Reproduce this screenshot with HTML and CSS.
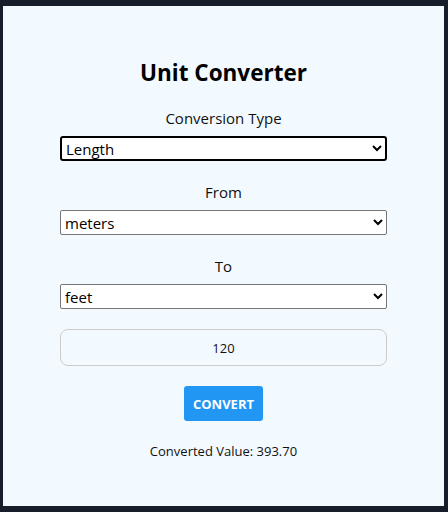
FILE: index.html
```html
<!DOCTYPE html>
<html>
<head>
<meta charset="utf-8">
<link rel="stylesheet" href="styles.css">
</head>
<body>
<div class="card">
  <h1 class="title">Unit Converter</h1>
  <div class="field">
    <label class="label">Conversion Type</label>
    <select class="select focused">
      <option>Length</option>
    </select>
  </div>
  <div class="field">
    <label class="label">From</label>
    <select class="select">
      <option>meters</option>
    </select>
  </div>
  <div class="field">
    <label class="label">To</label>
    <select class="select">
      <option>feet</option>
    </select>
  </div>
  <input class="amount" type="text" value="120">
  <button class="btn">CONVERT</button>
  <p class="result">Converted Value: 393.70</p>
</div>
</body>
</html>
```
FILE: styles.css
```css
html, body {
  margin: 0;
  padding: 0;
}
body {
  background: #181d2b;
  padding: 6px 4px 6px 3px;
  height: 512px;
  box-sizing: border-box;
  font-family: "Open Sans", "Noto Sans", sans-serif;
  color: #111;
}
.card {
  background: #f2faff;
  height: 500px;
  box-sizing: border-box;
  padding: 52px 57px 0;
  display: flex;
  flex-direction: column;
  align-items: stretch;
  text-align: center;
}
.title {
  margin: 0;
  font-size: 22.5px;
  font-weight: 700;
  line-height: 30px;
  color: #000;
}
.field {
  display: flex;
  flex-direction: column;
  margin-top: 20px;
}
.field + .field {
  margin-top: 21px;
}
.label {
  font-size: 15px;
  line-height: 20px;
  margin-bottom: 8px;
  color: #111;
}
.select {
  height: 25px;
  font-family: inherit;
  font-size: 15px;
  padding: 0;
  border: 1px solid #767676;
  border-radius: 2px;
  background: #fff;
  color: #000;
}
.select.focused {
  height: 25px;
  border: 2px solid #000;
  border-radius: 3px;
}
.amount {
  margin-top: 20px;
  height: 37px;
  box-sizing: border-box;
  border: 1px solid #ccc;
  border-radius: 8px;
  background: #f2faff;
  text-align: center;
  font-family: inherit;
  font-size: 13px;
  color: #111;
}
.btn {
  align-self: center;
  margin-top: 20px;
  width: 79px;
  height: 35px;
  border: none;
  border-radius: 3px;
  background: #2196f3;
  color: #fff;
  font-family: inherit;
  font-weight: 700;
  font-size: 13px;
}
.result {
  margin: 20px 0 0;
  font-size: 13px;
  line-height: 20px;
  color: #111;
}
```
